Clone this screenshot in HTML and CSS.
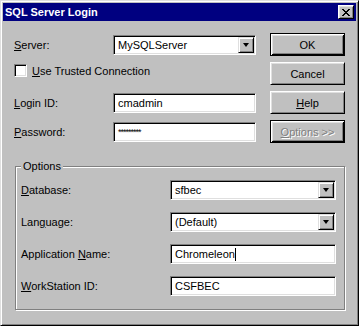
FILE: index.html
```html
<!DOCTYPE HTML>
<html lang="en">
<head>
    <meta charset="UTF-8">
    <title>SQL Server Login</title>
    <link rel="stylesheet" href="styles.css">
</head>
<body>
    <div class="window">
        <div class="titlebar">
            <span class="title">SQL Server Login</span>
            <span class="close">
                <svg width="8" height="7" viewBox="0 0 8 7" shape-rendering="crispEdges">
                    <path d="M0 0h2v1h-2zM6 0h2v1h-2zM1 1h2v1h-2zM5 1h2v1h-2zM2 2h4v1h-4zM3 3h2v1h-2zM2 4h4v1h-4zM1 5h2v1h-2zM5 5h2v1h-2zM0 6h2v1h-2zM6 6h2v1h-2z" fill="#000"/>
                </svg>
            </span>
        </div>
        <div class="client">
            <div class="top">
                <div class="fields">
                    <div class="row">
                        <span class="lbl"><u>S</u>erver:</span>
                        <div class="field combo">
                            <span class="val">MySQLServer</span>
                            <span class="drop"><i></i></span>
                        </div>
                    </div>
                    <div class="check">
                        <span class="box"></span>
                        <span><u>U</u>se Trusted Connection</span>
                    </div>
                    <div class="row login">
                        <span class="lbl"><u>L</u>ogin ID:</span>
                        <div class="field"><span class="val">cmadmin</span></div>
                    </div>
                    <div class="row pwd">
                        <span class="lbl"><u>P</u>assword:</span>
                        <div class="field"><span class="val stars">*********</span></div>
                    </div>
                </div>
                <div class="buttons">
                    <div class="btn default">OK</div>
                    <div class="btn">Cancel</div>
                    <div class="btn"><u>H</u>elp</div>
                    <div class="btn default disabled"><u>O</u>ptions &gt;&gt;</div>
                </div>
            </div>
            <div class="group">
                <div class="legend">Options</div>
                <div class="row first">
                    <span class="lbl"><u>D</u>atabase:</span>
                    <div class="field combo">
                        <span class="val">sfbec</span>
                        <span class="drop"><i></i></span>
                    </div>
                </div>
                <div class="row">
                    <span class="lbl">Lan<u>g</u>uage:</span>
                    <div class="field combo">
                        <span class="val">(Default)</span>
                        <span class="drop"><i></i></span>
                    </div>
                </div>
                <div class="row">
                    <span class="lbl">Application <u>N</u>ame:</span>
                    <div class="field"><span class="val">Chromeleon</span><span class="caret"></span></div>
                </div>
                <div class="row">
                    <span class="lbl"><u>W</u>orkStation ID:</span>
                    <div class="field"><span class="val">CSFBEC</span></div>
                </div>
            </div>
        </div>
    </div>
</body>
</html>
```

FILE: styles.css
```css
body{margin:0;font-family:"Liberation Sans",Arial,sans-serif;font-size:11px;color:#000;}

.window{
    width:359px;
    height:326px;
    box-sizing:border-box;
    padding:2px;
    border:1px solid;
    border-color:#dfdfdf #000 #000 #dfdfdf;
    box-shadow:inset 1px 1px #fff, inset -1px -1px #808080;
    background-color:#c0c0c0;
    overflow:hidden;
}
.titlebar{
    display:flex;
    align-items:center;
    height:18px;
    padding:0 2px 0 2px;
    background-color:#000080;
    color:#fff;
}
.titlebar .title{
    flex:1;
    font-weight:bold;
    font-size:11px;
}
.titlebar .close{
    display:flex;
    align-items:center;
    justify-content:center;
    width:16px;
    height:14px;
    box-sizing:border-box;
    border:1px solid;
    border-color:#fff #000 #000 #fff;
    box-shadow:inset 1px 1px #dfdfdf, inset -1px -1px #808080;
    background-color:#c0c0c0;
}

.top{
    display:flex;
    padding:12px 0 0 11px;
}
.fields{
    width:242px;
    padding-top:2px;
}
.row{
    display:flex;
    align-items:center;
    height:20px;
}
.row .lbl{width:99px;}
.row .field{flex:1;}
.check{
    display:flex;
    align-items:center;
    height:13px;
    margin-top:9px;
}
.check .box{
    width:13px;
    height:13px;
    box-sizing:border-box;
    margin-right:5px;
    border:1px solid;
    border-color:#808080 #fff #fff #808080;
    box-shadow:inset 1px 1px #000, inset -1px -1px #dfdfdf;
    background-color:#fff;
}
.login{margin-top:16px;}
.pwd{margin-top:9px;}

.field{
    display:flex;
    align-items:center;
    height:20px;
    box-sizing:border-box;
    padding:2px;
    border:1px solid;
    border-color:#808080 #fff #fff #808080;
    box-shadow:inset 1px 1px #000, inset -1px -1px #dfdfdf;
    background-color:#fff;
}
.field .val{padding-left:2px;}
.field .stars{font-size:9px;letter-spacing:-1px;}
.combo .val{flex:1;}
.combo .drop{
    display:flex;
    align-items:center;
    justify-content:center;
    width:16px;
    height:16px;
    box-sizing:border-box;
    margin-right:-1px;
    border:1px solid;
    border-color:#dfdfdf #000 #000 #dfdfdf;
    box-shadow:inset 1px 1px #fff, inset -1px -1px #808080;
    background-color:#c0c0c0;
}
.combo .drop i{
    width:0;
    height:0;
    border-left:3.5px solid transparent;
    border-right:3.5px solid transparent;
    border-top:4px solid #000;
}
.caret{
    width:1px;
    height:13px;
    background-color:#000;
}

.buttons{
    display:flex;
    flex-direction:column;
    gap:6px;
    width:75px;
    margin-left:14px;
}
.btn{
    display:flex;
    align-items:center;
    justify-content:center;
    height:23px;
    box-sizing:border-box;
    border:1px solid;
    border-color:#fff #000 #000 #fff;
    box-shadow:inset 1px 1px #dfdfdf, inset -1px -1px #808080;
}
.btn.default{
    border-color:#000;
    box-shadow:inset 1px 1px #fff, inset -1px -1px #000, inset 2px 2px #dfdfdf, inset -2px -2px #808080;
}
.btn.disabled{
    color:#808080;
    text-shadow:1px 1px #fff;
}

.group{
    width:330px;
    height:144px;
    box-sizing:border-box;
    margin:23px 0 0 12px;
    padding:0 8px 0 5px;
    border:1px solid #808080;
    box-shadow:inset 1px 1px #fff, 1px 1px #fff;
}
.group .legend{
    width:fit-content;
    height:13px;
    margin:-7px 0 0 0;
    padding:0 2px;
    line-height:13px;
    background-color:#c0c0c0;
}
.group .row{margin-top:12px;}
.group .row.first{margin-top:7px;}
.group .row .lbl{width:149px;}
```
